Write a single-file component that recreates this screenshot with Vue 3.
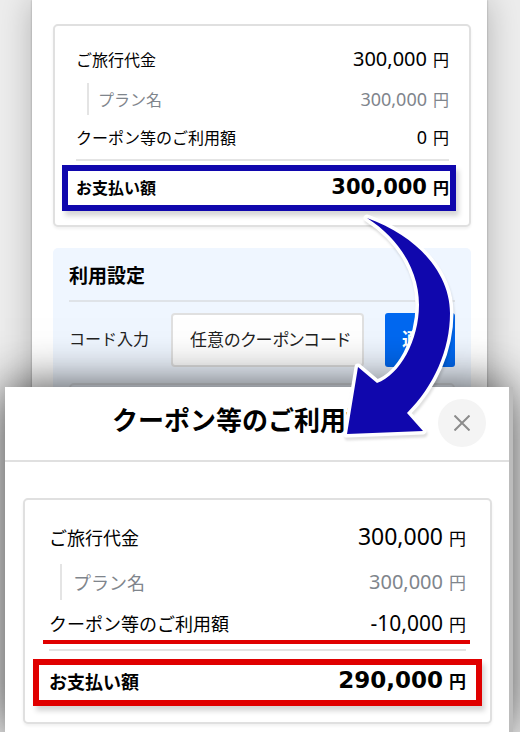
<script setup>
const before = {
  fare: '300,000',
  plan: '300,000',
  coupon: '0',
  total: '300,000',
}
const after = {
  fare: '300,000',
  plan: '300,000',
  coupon: '-10,000',
  total: '290,000',
}
</script>

<template>
  <div class="page">
    <main class="sheet">
      <dl class="card">
        <div class="row"><dt>ご旅行代金</dt><dd><span class="num large">{{ before.fare }}</span>円</dd></div>
        <div class="row plan"><dt>プラン名</dt><dd><span class="num">{{ before.plan }}</span>円</dd></div>
        <div class="row coupon"><dt>クーポン等のご利用額</dt><dd><span class="num">{{ before.coupon }}</span>円</dd></div>
        <div class="row total"><dt>お支払い額</dt><dd><span class="num">{{ before.total }}</span>円</dd></div>
      </dl>

      <section class="settings">
        <h2>利用設定</h2>
        <form class="code" @submit.prevent>
          <label for="code">コード入力</label>
          <input id="code" type="text" value="任意のクーポンコード">
          <button type="submit">適用</button>
        </form>
        <div class="list"></div>
      </section>
    </main>

    <section class="modal" role="dialog" aria-labelledby="modal-title">
      <header>
        <h1 id="modal-title">クーポン等のご利用設定</h1>
        <button class="close" type="button" aria-label="閉じる">
          <svg width="16" height="16" viewBox="0 0 16 16"><path d="M0.5 0.5 15.5 15.5M15.5 0.5 0.5 15.5" /></svg>
        </button>
      </header>
      <dl class="card result">
        <div class="row"><dt>ご旅行代金</dt><dd><span class="num large">{{ after.fare }}</span>円</dd></div>
        <div class="row plan"><dt>プラン名</dt><dd><span class="num">{{ after.plan }}</span>円</dd></div>
        <div class="row coupon"><dt>クーポン等のご利用額</dt><dd><span class="num">{{ after.coupon }}</span>円</dd></div>
        <div class="row total"><dt>お支払い額</dt><dd><span class="num">{{ after.total }}</span>円</dd></div>
      </dl>
    </section>

    <svg class="arrow" width="100" height="240" viewBox="340 205 100 240" aria-hidden="true">
      <path d="M367 218C420 237 450 275 450 313C450 350 434 386 407 413L423 431L347 434L358 367L377 383C400 375 419 340 419 305C419 272 401 240 367 218Z" />
    </svg>
  </div>
</template>

<style>
body {
  margin: 0;
}
</style>

<style scoped>
* {
  box-sizing: border-box;
}

.page {
  position: relative;
  display: flex;
  min-height: 100vh;
  overflow: hidden;
  background: #ededed;
  color: #000;
  font-family: "Noto Sans CJK JP", sans-serif;
  font-size: 16px;
}

.sheet {
  flex: 1;
  min-width: 0;
  margin: 0 33px 0 32px;
  padding: 24px 16px 0 21px;
  background: #fff;
  box-shadow: 0 0 2px rgba(0, 0, 0, 0.3), 0 0 32px rgba(0, 0, 0, 0.25);
}

.card {
  margin: 0;
  padding: 13px 20px 14px 21px;
  border: 2px solid #e0e0e0;
  border-radius: 5px;
  background: #fff;
  box-shadow: 0 2px 3px rgba(0, 0, 0, 0.06);
}

.row {
  display: flex;
  align-items: center;
  justify-content: space-between;
  height: 40px;
  line-height: 32px;
}

dd {
  display: flex;
  align-items: baseline;
  gap: 6px;
  margin: 0;
}

.num {
  font-family: "Noto Sans", sans-serif;
  font-size: 18px;
}

.num.large {
  font-size: 20px;
}

.plan {
  color: #7f858c;
}

.plan dt {
  margin-left: 11px;
  padding-left: 9px;
  border-left: 2px solid #e4e4e4;
}

.coupon {
  height: 36px;
}

.total {
  position: relative;
  height: 46px;
  margin: 10px -7px 0 -14px;
  padding: 0 1px 2px 8px;
  border: 6px solid #1007ad;
  box-shadow: 3px 5px 5px rgba(0, 0, 0, 0.16);
  font-weight: 700;
}

.total::before {
  content: "";
  position: absolute;
  top: -12px;
  right: 1px;
  left: 8px;
  height: 2px;
  background: #e4e4e4;
}

.total .num {
  font-family: "DejaVu Sans", sans-serif;
  font-size: 21px;
}

.settings {
  margin-top: 21px;
  padding: 11px 16px 0;
  border-radius: 5px;
  background: #eff6ff;
}

.settings h2 {
  margin: 0 0 11px;
  padding-bottom: 9px;
  border-bottom: 2px solid #dfe3e8;
  font-size: 19px;
  line-height: 32px;
}

.code {
  display: flex;
  align-items: center;
  gap: 21px;
}

.code label {
  flex: none;
  width: 81px;
  padding-bottom: 4px;
  color: #222;
}

.code input {
  flex: 1;
  min-width: 0;
  height: 54px;
  padding: 0 8px 4px 17px;
  border: 2px solid #e0e0e0;
  border-radius: 4px;
  background: #fff;
  color: #222;
  font: 17px "Noto Sans CJK JP", sans-serif;
  font-feature-settings: "palt";
}

.code button {
  width: 70px;
  height: 54px;
  padding: 0 0 4px;
  border: 0;
  border-radius: 3px;
  background: #0068f0;
  color: #fff;
  font: 700 18px "Noto Sans CJK JP", sans-serif;
}

.list {
  height: 60px;
  margin-top: 16px;
  border: 2px solid #dfe3e8;
  border-radius: 5px;
}

.modal {
  position: absolute;
  inset: 387px 11px 0 5px;
  background: #fff;
  box-shadow: 4px 0 0 #bcbcbc, 0 0 46px rgba(0, 0, 0, 0.75);
}

.modal header {
  display: grid;
  grid-template-columns: 48px 1fr 48px;
  align-items: center;
  height: 75px;
  padding: 0 23px 2px;
  border-bottom: 2px solid #e0e0e0;
}

.modal h1 {
  grid-column: 2;
  justify-self: center;
  margin: 0;
  padding: 0 4px 8px 0;
  font-size: 26px;
  line-height: 40px;
  white-space: nowrap;
}

.close {
  display: grid;
  place-items: center;
  width: 48px;
  height: 48px;
  padding: 0;
  border: 0;
  border-radius: 50%;
  background: #f4f4f4;
}

.close path {
  fill: none;
  stroke: #8c8c8c;
  stroke-width: 2;
}

.result {
  margin: 36px 17px 0 18px;
  padding: 14px 24px 16px;
  font-size: 18px;
}

.result .row {
  height: 45px;
  line-height: 36px;
}

.result .plan dt {
  padding-left: 11px;
}

.result .num {
  font-size: 20px;
}

.result .large {
  font-size: 23px;
}

.result .coupon {
  height: 40px;
  margin: 0 -4px 0 -6px;
  padding: 2px 4px 0 6px;
  border-bottom: 4px solid #e00000;
  line-height: 32px;
}

.result .coupon .num {
  font-size: 21px;
}

.result dd {
  font-size: 17px;
}

.result .total {
  height: 47px;
  margin: 15px -16px 0;
  padding: 0 10px 4px;
  border-color: #e00000;
}

.result .total::before {
  top: -16px;
  right: 10px;
  left: 10px;
}

.result .total .num {
  font-size: 23px;
}

.arrow {
  position: absolute;
  top: 205px;
  right: 80px;
  overflow: visible;
  filter: drop-shadow(1px 3px 1px rgba(0, 0, 0, 0.12));
}

.arrow path {
  fill: #1007ad;
  stroke: #fff;
  stroke-width: 7;
  stroke-linejoin: round;
  paint-order: stroke;
}
</style>
